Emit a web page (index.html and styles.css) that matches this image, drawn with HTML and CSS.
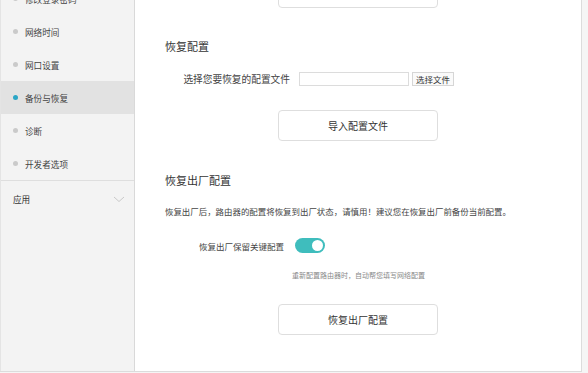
FILE: index.html
```html
<!DOCTYPE html>
<html lang="zh-CN">

<head>
    <meta charset="UTF-8">
    <meta name="viewport" content="width=device-width, initial-scale=1.0">
    <title>备份与恢复</title>
    <link rel="stylesheet" href="styles.css">
</head>

<body>
    <div class="page">
        <aside class="sidebar">
            <ul class="menu">
                <li class="menu-item"><span class="dot"></span>修改登录密码</li>
                <li class="menu-item"><span class="dot"></span>网络时间</li>
                <li class="menu-item"><span class="dot"></span>网口设置</li>
                <li class="menu-item active"><span class="dot"></span>备份与恢复</li>
                <li class="menu-item"><span class="dot"></span>诊断</li>
                <li class="menu-item"><span class="dot"></span>开发者选项</li>
            </ul>
            <div class="group">
                <span>应用</span>
                <svg class="chevron" width="12" height="7" viewBox="0 0 12 7">
                    <polyline points="1,1 6,5.5 11,1" fill="none" stroke="#c9c9c9" stroke-width="1" />
                </svg>
            </div>
        </aside>

        <main class="content">
            <button class="btn btn-top"></button>

            <h3 class="title title-first">恢复配置</h3>
            <div class="file-row">
                <label class="file-label">选择您要恢复的配置文件</label>
                <span class="file-input"></span>
                <span class="file-btn">选择文件</span>
            </div>
            <button class="btn btn-import">导入配置文件</button>

            <h3 class="title title-reset">恢复出厂配置</h3>
            <p class="desc">恢复出厂后，路由器的配置将恢复到出厂状态，请慎用！建议您在恢复出厂前备份当前配置。</p>
            <div class="toggle-row">
                <span class="toggle-label">恢复出厂保留关键配置</span>
                <span class="switch on"><span class="knob"></span></span>
            </div>
            <p class="hint">重新配置路由器时，自动帮您填写网络配置</p>
            <button class="btn btn-reset">恢复出厂配置</button>
        </main>
    </div>
</body>

</html>
```

FILE: styles.css
```css
body {
    margin: 0;
    height: 373px;
    overflow: hidden;
    background-color: #f5f5f5;
    font-family: "Noto Sans CJK SC", "Noto Sans", sans-serif;
    color: #333;
}

.page {
    display: flex;
    width: 582px;
    height: 372px;
    box-sizing: border-box;
    border-bottom: 1px solid #dcdcdc;
}

/* 左侧菜单 */
.sidebar {
    width: 135px;
    box-sizing: border-box;
    background-color: #f3f3f3;
    border-left: 1px solid #e4e4e4;
    border-right: 1px solid #d9d9d9;
}

.menu {
    list-style: none;
    margin: -18px 0 0;
    padding: 0;
    border-bottom: 1px solid #dedede;
}

.menu-item {
    display: flex;
    align-items: center;
    height: 33px;
    padding-left: 12px;
    font-size: 8.6px;
    color: #444;
}

.menu-item .dot {
    width: 5px;
    height: 5px;
    border-radius: 50%;
    background-color: #cacaca;
    margin-right: 7px;
}

.menu-item.active {
    background-color: #e2e2e2;
}

.menu-item.active .dot {
    background-color: #2ba6c6;
}

.group {
    display: flex;
    align-items: center;
    justify-content: space-between;
    height: 36px;
    padding: 0 9px 0 12px;
    font-size: 8.6px;
    color: #333;
}

/* 右侧内容 */
.content {
    flex: 1;
    display: flex;
    flex-direction: column;
    background-color: #fff;
    border-right: 1px solid #dcdcdc;
    padding-left: 30px;
}

.btn {
    display: flex;
    align-items: center;
    justify-content: center;
    width: 160px;
    height: 32px;
    margin: 0 0 0 113px;
    padding: 0;
    border: 1px solid #dedede;
    border-radius: 4px;
    background-color: #fff;
    font-family: inherit;
    font-size: 10px;
    color: #333;
}

.btn-top {
    margin-top: -24px;
}

.title {
    margin: 0;
    font-size: 11px;
    font-weight: normal;
    line-height: 16px;
    color: #333;
}

.title-first {
    margin-top: 30px;
}

.file-row {
    display: flex;
    align-items: center;
    height: 14px;
    margin-top: 18px;
}

.file-label {
    width: 125px;
    text-align: right;
    font-size: 9.7px;
    color: #444;
}

.file-input {
    width: 110px;
    height: 14px;
    box-sizing: border-box;
    margin-left: 9px;
    border: 1px solid #dcdcdc;
}

.file-btn {
    height: 14px;
    box-sizing: border-box;
    margin-left: 3px;
    padding: 0 3px;
    border: 1px solid #d6d6d6;
    background-color: #fafafa;
    font-size: 8.5px;
    line-height: 12px;
    color: #333;
}

.btn-import {
    margin-top: 24px;
    height: 31px;
}

.title-reset {
    margin-top: 31px;
}

.desc {
    margin: 16px 0 0;
    font-size: 8.45px;
    line-height: 14px;
    color: #444;
}

.toggle-row {
    display: flex;
    align-items: center;
    height: 15px;
    margin-top: 20px;
}

.toggle-label {
    width: 119px;
    text-align: right;
    font-size: 8.5px;
    color: #444;
}

.switch {
    display: flex;
    align-items: center;
    justify-content: flex-end;
    width: 30px;
    height: 15px;
    box-sizing: border-box;
    margin-left: 11px;
    padding: 2px;
    border-radius: 8px;
    background-color: #3fbdbd;
}

.knob {
    width: 11px;
    height: 11px;
    border-radius: 50%;
    background-color: #fff;
}

.hint {
    margin: 16px 0 0 127px;
    font-size: 7px;
    line-height: 12px;
    color: #888;
}

.btn-reset {
    margin-top: 23px;
    height: 31px;
}
```
